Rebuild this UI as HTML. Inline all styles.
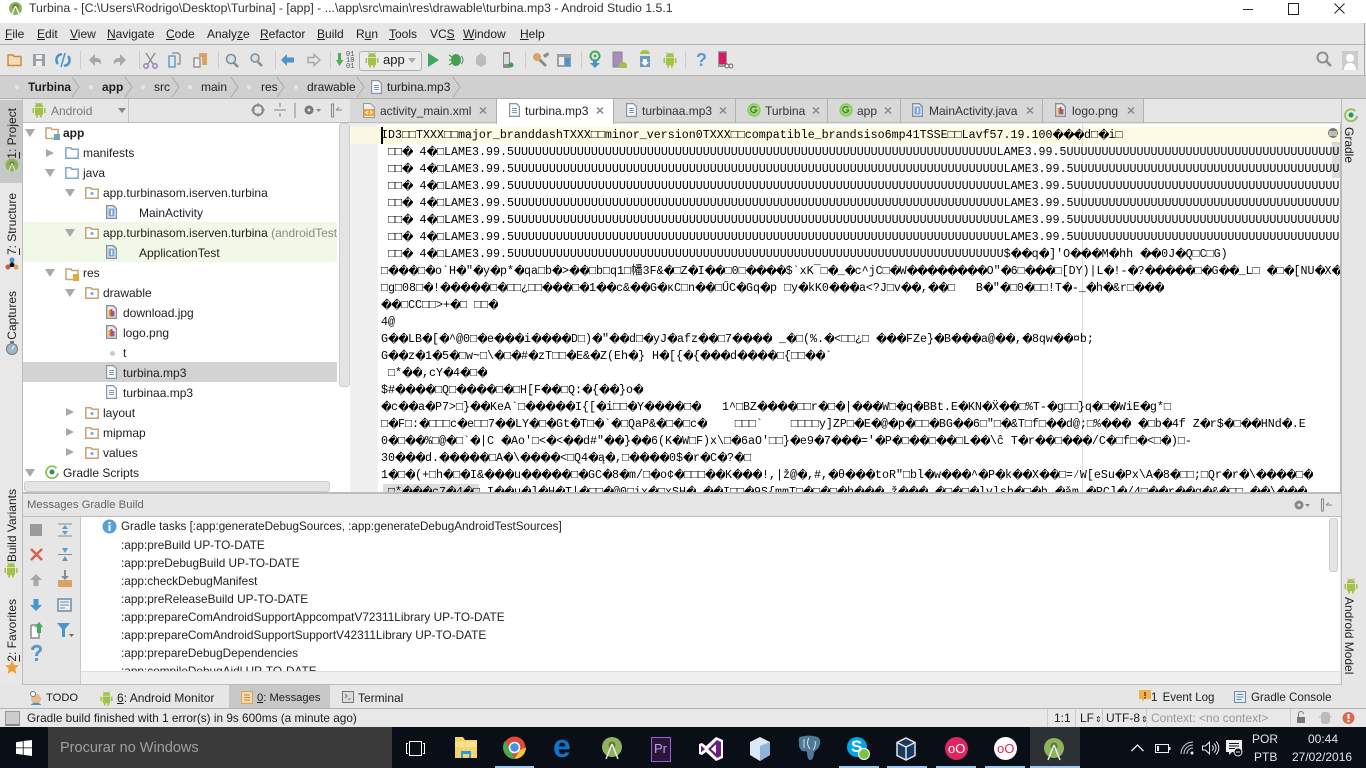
<!DOCTYPE html>
<html><head><meta charset="utf-8"><title>Turbina</title>
<style>
html,body{margin:0;padding:0;width:1366px;height:768px;overflow:hidden;background:#e6e6e6}
body{font:12px "Liberation Sans",sans-serif;color:#1e1e1e;position:relative}
.a,.t,svg.s{position:absolute}
.t{white-space:pre;line-height:16px;height:16px}
svg.s{overflow:visible}
.b{font-weight:bold}
.v{position:absolute;writing-mode:vertical-rl;transform:rotate(180deg);white-space:pre;font-size:12px;line-height:14px}
.e{position:absolute;left:381px;width:959px;height:17px;overflow:hidden;white-space:pre;font:11.67px/17px "Liberation Mono","DejaVu Sans Mono",monospace;color:#000}
.e i{display:inline-block;width:10px;font:normal 11.5px/17px "DejaVu Sans",sans-serif;text-align:center;vertical-align:top;overflow:hidden}
.e.w i{width:10.5px}
.m{left:121px;color:#222;font-size:11.8px}
.u{text-decoration:underline}
</style></head>
<body>
<svg width="0" height="0" style="position:absolute">
<defs>
<symbol id="and" viewBox="0 0 14 16"><path fill="#a4c14a" d="M3 5a4 4 0 0 1 8 0zM3 5.8h8v6.4a1 1 0 0 1-1 1H4a1 1 0 0 1-1-1zM.5 6h1.6v5H.5zM11.9 6h1.6v5h-1.6zM4.3 13h1.7v2.6H4.300zM8 13h1.700v2.600H8z"/><path stroke="#a4c14a" d="M4.500 2L3.500.5M9.500 2l1-1.500"/></symbol>
<symbol id="pkg" viewBox="0 0 14 12"><path fill="#fff" stroke="#c4a377" stroke-width="1.500" d="M.8.8h5l1 1.500h6.400v9H.8z"/><circle cx="7" cy="6.500" r="1.600" fill="#7fb0d0"/></symbol>
<symbol id="blu" viewBox="0 0 14 12"><path fill="#fff" stroke="#7fa9c8" stroke-width="1.500" d="M.8.800h5l1 1.500h6.400v9H.8z"/></symbol>
<symbol id="fil" viewBox="0 0 11 14"><path fill="#fbfbfb" stroke="#8a949c" stroke-width="1.200" d="M.6.600h6.800l3 3v9.800H.600z"/><path stroke="#6d9cbc" d="M3 5.500h5M3 7.500h5M3 9.500h5"/></symbol>
<symbol id="jav" viewBox="0 0 11 14"><path fill="#eef" stroke="#8a8f96" stroke-width="1.400" d="M.7.700h6.700l3 3v9.600H.700z"/><rect x="2.500" y="3.500" width="6" height="8" fill="#74a9d8"/><rect x="5" y="5" width="1.300" height="5" fill="#fff"/></symbol>
<symbol id="img" viewBox="0 0 11 14"><path fill="#eee" stroke="#8a8f96" stroke-width="1.400" d="M.7.700h6.700l3 3v9.600H.700z"/><rect x="2.500" y="5" width="2" height="6.500" fill="#d9a23c"/><rect x="4.500" y="4" width="2" height="7.500" fill="#c24b4b"/><rect x="6.500" y="6" width="2" height="5.500" fill="#8a5fb0"/></symbol>
<symbol id="gro" viewBox="0 0 14 14"><circle cx="7" cy="7" r="6.700" fill="#8ccb63"/><circle cx="7" cy="7" r="5" fill="#a5dc7e"/><path fill="none" stroke="#3d8a2c" stroke-width="1.400" d="M9.300 5a3 3 0 1 0 .4 2.200H7.300"/></symbol>
<symbol id="gr" viewBox="0 0 14 14"><path fill="none" stroke="#8cc152" stroke-width="1.800" d="M11.500 3.200A6 6 0 1 0 13 8"/><path fill="none" stroke="#999" stroke-width="1" d="M11 11.500A6 6 0 0 0 13 8"/><circle cx="7" cy="7" r="2.500" fill="#27915a"/></symbol>
</defs></svg>

<!-- title bar -->
<div class="a" style="left:0;top:0;width:1366px;height:23px;background:#fff"></div>
<svg class="s" style="left:8px;top:1px" width="15" height="15" viewBox="0 0 15 15"><circle cx="7.500" cy="7.500" r="6.500" fill="#8fb35a"/><circle cx="7.500" cy="6" r="3" fill="#5f7a38"/><path stroke="#eee" stroke-width="1.500" d="M7.500 5L4 13M7.500 5L11 13"/></svg>
<div class="t" style="left:29px;top:0;font-size:12.300px;color:#333">Turbina - [C:\Users\Rodrigo\Desktop\Turbina] - [app] - ...\app\src\main\res\drawable\turbina.mp3 - Android Studio 1.5.1</div>
<div class="a" style="left:1243px;top:9px;width:10px;height:1px;background:#222"></div>
<div class="a" style="left:1288px;top:3px;width:9px;height:10px;border:1px solid #222"></div>
<svg class="s" style="left:1334px;top:3px" width="11" height="11"><path stroke="#222" fill="none" d="M.5.500l10 10M10.500.500l-10 10"/></svg>
<div class="a" style="left:1364px;top:23px;width:1px;height:77px;background:#aaa"></div>

<!-- menu -->
<div class="a" style="left:0;top:44px;width:1366px;height:1px;background:#b4b4b4"></div>
<div class="t" style="left:5px;top:26px"><span class="u">F</span>ile</div>
<div class="t" style="left:37px;top:26px"><span class="u">E</span>dit</div>
<div class="t" style="left:70px;top:26px"><span class="u">V</span>iew</div>
<div class="t" style="left:107px;top:26px"><span class="u">N</span>avigate</div>
<div class="t" style="left:166px;top:26px"><span class="u">C</span>ode</div>
<div class="t" style="left:207px;top:26px">Analy<span class="u">z</span>e</div>
<div class="t" style="left:260px;top:26px"><span class="u">R</span>efactor</div>
<div class="t" style="left:317px;top:26px"><span class="u">B</span>uild</div>
<div class="t" style="left:356px;top:26px">R<span class="u">u</span>n</div>
<div class="t" style="left:389px;top:26px"><span class="u">T</span>ools</div>
<div class="t" style="left:430px;top:26px">VC<span class="u">S</span></div>
<div class="t" style="left:463px;top:26px"><span class="u">W</span>indow</div>
<div class="t" style="left:520px;top:26px"><span class="u">H</span>elp</div>

<!-- toolbar -->
<div class="a" style="left:0;top:75px;width:1366px;height:1px;background:#b4b4b4"></div>
<svg class="s" style="left:0;top:45px" width="760" height="30" viewBox="0 0 760 30">
<path fill="#f3dcb4" stroke="#c98f45" stroke-width="1.500" d="M8 10h5l1 1.500h7v9H8z"/>
<path fill="#9aa0a6" d="M33 9h12v12H33z"/><path fill="#eee" d="M36 10h6v4h-6zM36 16h6v5h-6z"/>
<path fill="none" stroke="#4a94cc" stroke-width="2.500" d="M58 19a6 6 0 0 1 1-9l3-1M68 11a6 6 0 0 1-1 9l-3 1"/><path stroke="#4a94cc" stroke-width="1.500" d="M61 22l4-14"/>
<path stroke="#ccc" d="M80.500 6v18M139.500 6v18M218.500 6v18M275.500 6v18M330.500 6v18M525.500 6v18M581.500 6v18M685.500 6v18"/>
<path fill="#a8a8a8" d="M89 15l6-6v4c4 0 7 1 6 7-1-3-3-3-6-3v4z"/>
<path fill="#a8a8a8" d="M126 15l-6-6v4c-4 0-7 1-6 7 1-3 3-3 6-3v4z"/>
<path stroke="#8a8a8a" stroke-width="1.300" d="M146 8l7 11M155 8l-7 11"/><circle cx="146" cy="21" r="2.200" fill="none" stroke="#a07cc0" stroke-width="1.500"/><circle cx="155" cy="21" r="2.200" fill="none" stroke="#a07cc0" stroke-width="1.500"/>
<path fill="#dce9f3" stroke="#5d8fb5" stroke-width="1.300" d="M169 11h6v11h-6z"/><path fill="none" stroke="#8a8a8a" stroke-width="1.300" d="M172 8h6l2 2v9h-3"/>
<path fill="#eee" stroke="#8a8a8a" stroke-width="1.300" d="M194 13h6v9h-6z"/><path fill="#d9a463" d="M199 8h8v12h-5v-8h-3z"/>
<circle cx="231" cy="14" r="4.500" fill="#cfe3ef" stroke="#8a8a8a" stroke-width="1.500"/><path stroke="#8a8a8a" stroke-width="2.500" d="M234 18l4 4"/>
<circle cx="255" cy="13" r="4" fill="#cfe3ef" stroke="#8a8a8a" stroke-width="1.500"/><path stroke="#8a8a8a" stroke-width="2.500" d="M258 17l4 4"/>
<path fill="#4a94cc" d="M281 15l6-6v3.500h7v5h-7V21z"/>
<path fill="none" stroke="#a8a8a8" stroke-width="1.500" d="M320 15l-6-5.500v3h-6v5h6v3z"/>
<path fill="#4caf50" d="M338 8h3v7h2.500L339.500 21 336 15h2z"/>
</svg>
<div class="t" style="left:346px;top:52px;font:7px/6px 'Liberation Mono',monospace;height:18px;color:#555">01
10
01</div>
<div class="a" style="left:359px;top:51px;width:61px;height:18px;background:#ececec;border:1px solid #b0b0b0;border-radius:3px"></div>
<svg class="s" style="left:365px;top:52px;width:14px;height:16px"><use href="#and"/></svg>
<div class="t" style="left:383px;top:52px;font-size:13px">app</div>
<svg class="s" style="left:408px;top:58px" width="9" height="6"><path fill="#aaa" d="M0 0h8L4 5z"/></svg>
<svg class="s" style="left:0;top:45px" width="760" height="30" viewBox="0 0 760 30">
<path fill="#3fa75b" d="M428 8l11 7-11 7z"/>
<ellipse cx="456" cy="15" rx="5" ry="6" fill="#459e52"/><path stroke="#459e52" stroke-width="1.200" d="M449 10l3 2M449 15h3M449 20l3-2"/><path fill="none" stroke="#777" d="M461 11a5 5 0 0 1 0 8"/>
<path fill="#bbb" d="M476 12l5-4 5 4v7l-5 3-5-3z"/>
<rect x="503" y="7" width="7" height="16" rx="1" fill="#8a8a8a"/><rect x="504" y="9" width="5" height="10" fill="#dcdcdc"/><circle cx="511" cy="20" r="2.500" fill="#3f9b52"/>
<path fill="#8a8a8a" d="M540 13l7 7-2 2-7-7z"/><circle cx="537" cy="12" r="4" fill="#d9a463"/><path fill="#8a8a8a" d="M543 10l5-3 1 3-4 3z"/>
<rect x="557" y="9" width="14" height="13" fill="#9aa0a6"/><rect x="559" y="12" width="5" height="8" fill="#eee"/><rect x="565" y="13" width="5" height="8" fill="#4a94cc"/>
<circle cx="595" cy="11" r="4.500" fill="none" stroke="#43a860" stroke-width="2"/><circle cx="595" cy="11" r="1.500" fill="#43a860"/><path fill="#4a94cc" d="M593 15h4v3h3l-5 5-5-5h3z"/>
<rect x="613" y="7" width="9" height="15" fill="#a68cc0" stroke="#888"/><path fill="#a4c14a" d="M619 23v-3a4 3 0 0 1 8 0v3z"/>
<path fill="#a4c14a" d="M640 9a5 4 0 0 1 10 0z"/><rect x="640" y="11" width="10" height="11" fill="#6a9cc0"/><path fill="#fff" d="M643 14h4v3h2l-4 4-4-4h2z"/>
</svg>
<svg class="s" style="left:663px;top:52px;width:14px;height:16px"><use href="#and"/></svg>
<div class="t b" style="left:696px;top:50px;font-size:18px;line-height:20px;height:20px;color:#5b9bc8">?</div>
<svg class="s" style="left:717px;top:51px" width="18" height="18"><rect x="1" y="0" width="9" height="16" rx="1" fill="#999"/><rect x="2" y="1.500" width="7" height="11.500" fill="#d81b60"/><circle cx="10" cy="15" r="2" fill="#eee" stroke="#333" stroke-width=".7"/><circle cx="14" cy="15" r="2" fill="#eee" stroke="#333" stroke-width=".7"/></svg>
<svg class="s" style="left:1316px;top:51px" width="16" height="17"><circle cx="6.500" cy="6.500" r="5" fill="none" stroke="#8e8e8e" stroke-width="2"/><path stroke="#8e8e8e" stroke-width="2.500" d="M10 10l5 5"/></svg>
<div class="a" style="left:1342px;top:51px;width:16px;height:19px;background:#ccc"></div>
<svg class="s" style="left:1342px;top:51px" width="16" height="19"><circle cx="8" cy="7" r="4" fill="#fff"/><path fill="#fff" d="M2 19c0-5 3-7 6-7s6 2 6 7z"/></svg>

<!-- breadcrumb -->
<div class="a" style="left:0;top:76px;width:1366px;height:22px;background:#d0d0d0"></div>
<div class="a" style="left:0;top:98px;width:1366px;height:1px;background:#b0b0b0"></div>
<svg class="s" style="left:0;top:76px" width="500" height="22"><g fill="#e6e6e6"><circle cx="17" cy="11" r="2"/><circle cx="91" cy="11" r="2"/><circle cx="143" cy="11" r="2"/><circle cx="190" cy="11" r="2"/><circle cx="249" cy="11" r="2"/><circle cx="296" cy="11" r="2"/></g><path fill="none" stroke="#aaa" d="M72 1l7 10-7 10M125 1l7 10-7 10M172 1l7 10-7 10M231 1l7 10-7 10M277 1l7 10-7 10M357 1l7 10-7 10M453 1l7 10-7 10"/></svg>
<div class="t b" style="left:28px;top:79px">Turbina</div>
<div class="t b" style="left:102px;top:79px">app</div>
<div class="t" style="left:154px;top:79px">src</div>
<div class="t" style="left:201px;top:79px">main</div>
<div class="t" style="left:261px;top:79px">res</div>
<div class="t" style="left:307px;top:79px">drawable</div>
<svg class="s" style="left:371px;top:80px;width:11px;height:14px"><use href="#fil"/></svg>
<div class="t" style="left:387px;top:79px">turbina.mp3</div>

<!-- left strip -->
<div class="a" style="left:0;top:99px;width:22px;height:586px;background:#e8e8e8;border-right:1px solid #bcbcbc"></div>
<div class="a" style="left:0;top:100px;width:22px;height:83px;background:#c8c8c8"></div>
<div class="v" style="left:5px;top:108px"><span class="u">1</span>: Project</div>
<div class="v" style="left:5px;top:193px"><span class="u">7</span>: Structure</div>
<div class="v" style="left:5px;top:291px">Captures</div>
<div class="v" style="left:5px;top:489px">Build Variants</div>
<div class="v" style="left:5px;top:599px"><span class="u">2</span>: Favorites</div>
<svg class="s" style="left:5px;top:158px" width="14" height="14"><circle cx="7" cy="7" r="6.500" fill="#8fb35a"/><circle cx="7" cy="6" r="2.500" fill="#5f7a38"/><path stroke="#eee" d="M7 5l-3 8M7 5l3 8"/></svg>
<svg class="s" style="left:5px;top:257px" width="14" height="14"><path stroke="#999" d="M3 10l4-7 4 7"/><circle cx="7" cy="3" r="2.500" fill="#4a94cc"/><circle cx="3" cy="10" r="2.500" fill="#cc5a4a"/><circle cx="11" cy="10" r="2.500" fill="#d9a463"/></svg>
<svg class="s" style="left:5px;top:341px" width="14" height="14"><circle cx="7" cy="8" r="5.500" fill="#9bb7cc" stroke="#777"/><path stroke="#fff" d="M7 8l2-3"/><rect x="5" y="0" width="4" height="2" fill="#777"/></svg>
<svg class="s" style="left:4px;top:562px;width:14px;height:16px"><use href="#and"/></svg>
<svg class="s" style="left:5px;top:660px" width="14" height="14"><path fill="#eea03c" d="M7 0l2 5 5 .4-3.800 3.200L11.400 14 7 11 2.600 14l1.200-5.400L0 5.400 5 5z"/></svg>

<!-- project panel -->
<div class="a" style="left:23px;top:99px;width:327px;height:23px;background:#e6e6e6;border-bottom:1px solid #bcbcbc"></div>
<div class="a" style="left:128px;top:99px;width:1px;height:23px;background:#c4c4c4"></div>
<svg class="s" style="left:32px;top:102px;width:14px;height:16px"><use href="#and"/></svg>
<div class="t" style="left:51px;top:103px;color:#7a7a7a">Android</div>
<svg class="s" style="left:118px;top:108px" width="8" height="6"><path fill="#888" d="M0 0h8L4 5z"/></svg>
<svg class="s" style="left:251px;top:103px" width="90" height="16"><circle cx="7" cy="7" r="5" fill="none" stroke="#888" stroke-width="2"/><path stroke="#888" d="M7 0v4M7 10v4M0 7h4M10 7h4M23 7h12M29 0v4M29 10v4M44 0v15"/><circle cx="58" cy="7" r="4.500" fill="#777"/><circle cx="58" cy="7" r="1.500" fill="#e6e6e6"/><path fill="#888" d="M65 6h5l-2.500 3z"/><path stroke="#888" fill="none" d="M80.500 1v13h2V1zM85 7h6M85 7l3-2.500"/></svg>

<div class="a" style="left:23px;top:123px;width:327px;height:370px;background:#fff;overflow:hidden"></div>
<div class="a" style="left:23px;top:222px;width:314px;height:40px;background:#f1f8e8"></div>
<div class="a" style="left:23px;top:362px;width:314px;height:20px;background:#d2d2d2"></div>
<div class="a" style="left:339px;top:123px;width:9px;height:262px;background:#e4e4e4;border:1px solid #ccc;border-radius:3px"></div>
<div class="a" style="left:24px;top:481px;width:304px;height:9px;background:#e4e4e4;border:1px solid #ccc;border-radius:3px"></div>

<svg class="s" style="left:0;top:123px" width="100" height="360"><g fill="#a8a8a8">
<path d="M25 6h10l-5 8z"/>
<path d="M46 24v8l8-4z" transform="translate(0,2)"/>
<path d="M45 46h10l-5 8z"/>
<path d="M65 66h10l-5 8z"/>
<path d="M65 106h10l-5 8z"/>
<path d="M45 146h10l-5 8z"/>
<path d="M65 166h10l-5 8z"/>
<path d="M66 285v8l8-4z"/><path d="M66 305v8l8-4z"/><path d="M66 325v8l8-4z"/>
<path d="M25 346h10l-5 8z"/>
</g>
<path fill="#fff" stroke="#c4a377" stroke-width="1.500" d="M46 5h5l1 1.500h6v9H46z"/><rect x="54" y="11" width="6" height="6" fill="#6ea4c8"/>
<path fill="#fff" stroke="#c4a377" stroke-width="1.500" d="M66 146h5l1 1.500h6v9H66z"/><rect x="73" y="151" width="6" height="7" fill="#e0a93c"/>
</svg>
<svg class="s" style="left:65px;top:147px;width:14px;height:12px"><use href="#blu"/></svg>
<svg class="s" style="left:65px;top:167px;width:14px;height:12px"><use href="#blu"/></svg>
<svg class="s" style="left:85px;top:187px;width:14px;height:12px"><use href="#pkg"/></svg>
<svg class="s" style="left:85px;top:227px;width:14px;height:12px"><use href="#pkg"/></svg>
<svg class="s" style="left:85px;top:287px;width:14px;height:12px"><use href="#pkg"/></svg>
<svg class="s" style="left:85px;top:407px;width:14px;height:12px"><use href="#pkg"/></svg>
<svg class="s" style="left:85px;top:427px;width:14px;height:12px"><use href="#pkg"/></svg>
<svg class="s" style="left:85px;top:447px;width:14px;height:12px"><use href="#pkg"/></svg>
<svg class="s" style="left:106px;top:205px;width:11px;height:14px"><use href="#jav"/></svg>
<svg class="s" style="left:106px;top:245px;width:11px;height:14px"><use href="#jav"/></svg>
<svg class="s" style="left:106px;top:305px;width:11px;height:14px"><use href="#img"/></svg>
<svg class="s" style="left:106px;top:325px;width:11px;height:14px"><use href="#img"/></svg>
<div class="a" style="left:110px;top:351px;width:5px;height:5px;background:#ccc;border-radius:3px"></div>
<svg class="s" style="left:106px;top:365px;width:11px;height:14px"><use href="#fil"/></svg>
<svg class="s" style="left:106px;top:385px;width:11px;height:14px"><use href="#fil"/></svg>
<svg class="s" style="left:45px;top:465px;width:14px;height:14px"><use href="#gr"/></svg>

<div class="t b" style="left:63px;top:125px">app</div>
<div class="t" style="left:83px;top:145px">manifests</div>
<div class="t" style="left:83px;top:165px">java</div>
<div class="t" style="left:103px;top:185px">app.turbinasom.iserven.turbina</div>
<div class="t" style="left:139px;top:205px">MainActivity</div>
<div class="t" style="left:103px;top:225px">app.turbinasom.iserven.turbina <span style="color:#8a8a8a">(androidTest</span></div>
<div class="t" style="left:139px;top:245px">ApplicationTest</div>
<div class="t" style="left:83px;top:265px">res</div>
<div class="t" style="left:103px;top:285px">drawable</div>
<div class="t" style="left:123px;top:305px">download.jpg</div>
<div class="t" style="left:123px;top:325px">logo.png</div>
<div class="t" style="left:123px;top:345px">t</div>
<div class="t" style="left:123px;top:365px">turbina.mp3</div>
<div class="t" style="left:123px;top:385px">turbinaa.mp3</div>
<div class="t" style="left:103px;top:405px">layout</div>
<div class="t" style="left:103px;top:425px">mipmap</div>
<div class="t" style="left:103px;top:445px">values</div>
<div class="t" style="left:63px;top:465px">Gradle Scripts</div>

<!-- tabs -->
<div class="a" style="left:350px;top:99px;width:992px;height:23px;background:#d8d8d8;border-bottom:1px solid #bcbcbc"></div>
<div class="a" style="left:1143px;top:99px;width:199px;height:23px;background:#e6e6e6;border-bottom:1px solid #bcbcbc"></div>
<div class="a" style="left:496px;top:99px;width:116px;height:25px;background:#fff;border-right:1px solid #b0b0b0;border-left:1px solid #b0b0b0"></div>
<div class="a" style="left:735px;top:99px;width:1px;height:23px;background:#b0b0b0"></div>
<div class="a" style="left:827px;top:99px;width:1px;height:23px;background:#b0b0b0"></div>
<div class="a" style="left:900px;top:99px;width:1px;height:23px;background:#b0b0b0"></div>
<div class="a" style="left:1042px;top:99px;width:1px;height:23px;background:#b0b0b0"></div>
<div class="a" style="left:1143px;top:99px;width:1px;height:23px;background:#b0b0b0"></div>
<svg class="s" style="left:363px;top:103px" width="12" height="15"><path fill="#eee" stroke="#999" d="M.5.500h7l4 4v10H.500z"/><rect x="1" y="6" width="10" height="7" fill="#eda63c"/><path fill="none" stroke="#fff" d="M5 8L3 9.500 5 11M7 8l2 1.500L7 11"/></svg>
<svg class="s" style="left:509px;top:103px;width:11px;height:14px"><use href="#fil"/></svg>
<svg class="s" style="left:626px;top:103px;width:11px;height:14px"><use href="#fil"/></svg>
<svg class="s" style="left:747px;top:103px;width:14px;height:14px"><use href="#gro"/></svg>
<svg class="s" style="left:839px;top:103px;width:14px;height:14px"><use href="#gro"/></svg>
<svg class="s" style="left:912px;top:103px;width:11px;height:14px"><use href="#jav"/></svg>
<svg class="s" style="left:1055px;top:103px;width:11px;height:14px"><use href="#img"/></svg>
<div class="t" style="left:380px;top:103px;color:#333">activity_main.xml</div>
<div class="t" style="left:525px;top:103px">turbina.mp3</div>
<div class="t" style="left:642px;top:103px;color:#333">turbinaa.mp3</div>
<div class="t" style="left:765px;top:103px;color:#333">Turbina</div>
<div class="t" style="left:857px;top:103px;color:#333">app</div>
<div class="t" style="left:929px;top:103px;color:#333">MainActivity.java</div>
<div class="t" style="left:1072px;top:103px;color:#333">logo.png</div>
<svg class="s" style="left:0;top:107px" width="1143" height="8"><path stroke="#888" stroke-width="1.500" fill="none" d="M480 .5l6 6m0-6l-6 6M597 .5l6 6m0-6l-6 6M720 .5l6 6m0-6l-6 6M813 .5l6 6m0-6l-6 6M885 .5l6 6m0-6l-6 6M1027 .5l6 6m0-6l-6 6M1128 .5l6 6m0-6l-6 6"/></svg>

<!-- editor -->
<div class="a" style="left:350px;top:124px;width:991px;height:368px;background:#fff"></div>
<div class="a" style="left:350px;top:124px;width:28px;height:368px;background:#f0f0f0"></div>
<div class="a" style="left:350px;top:127px;width:28px;height:17px;background:#fdf8e4"></div>
<div class="a" style="left:378px;top:127px;width:962px;height:17px;background:#fffae3"></div>
<div class="a" style="left:1082px;top:124px;width:1px;height:368px;background:#dcdcdc"></div>
<div class="a" style="left:381px;top:127px;width:2px;height:17px;background:#000"></div>
<div class="e w" style="top:127px">ID3□□TXXX□□major_branddashTXXX□□minor_version0TXXX□□compatible_brandsiso6mp41TSSE□□Lavf57.19.100<i>�</i><i>�</i><i>�</i>d□<i>�</i>i□</div>
<div class="e w" style="top:144px"> □□<i>�</i> 4<i>�</i>□LAME3.99.5UUUUUUUUUUUUUUUUUUUUUUUUUUUUUUUUUUUUUUUUUUUUUUUUUUUUUUUUUUUUUUUUUUUUULAME3.99.5UUUUUUUUUUUUUUUUUUUUUUUUUUUUUUUUUUUUUUUUUUUUUUUUUU</div>
<div class="e w" style="top:161px"> □□<i>�</i> 4<i>�</i>□LAME3.99.5UUUUUUUUUUUUUUUUUUUUUUUUUUUUUUUUUUUUUUUUUUUUUUUUUUUUUUUUUUUUUUUUUUUUUULAME3.99.5UUUUUUUUUUUUUUUUUUUUUUUUUUUUUUUUUUUUUUUUUUUUUUUUUU</div>
<div class="e w" style="top:178px"> □□<i>�</i> 4<i>�</i>□LAME3.99.5UUUUUUUUUUUUUUUUUUUUUUUUUUUUUUUUUUUUUUUUUUUUUUUUUUUUUUUUUUUUUUUUUUUUUULAME3.99.5UUUUUUUUUUUUUUUUUUUUUUUUUUUUUUUUUUUUUUUUUUUUUUUUUU</div>
<div class="e w" style="top:195px"> □□<i>�</i> 4<i>�</i>□LAME3.99.5UUUUUUUUUUUUUUUUUUUUUUUUUUUUUUUUUUUUUUUUUUUUUUUUUUUUUUUUUUUUUUUUUUUUUULAME3.99.5UUUUUUUUUUUUUUUUUUUUUUUUUUUUUUUUUUUUUUUUUUUUUUUUUU</div>
<div class="e w" style="top:212px"> □□<i>�</i> 4<i>�</i>□LAME3.99.5UUUUUUUUUUUUUUUUUUUUUUUUUUUUUUUUUUUUUUUUUUUUUUUUUUUUUUUUUUUUUUUUUUUUUULAME3.99.5UUUUUUUUUUUUUUUUUUUUUUUUUUUUUUUUUUUUUUUUUUUUUUUUUU</div>
<div class="e w" style="top:229px"> □□<i>�</i> 4<i>�</i>□LAME3.99.5UUUUUUUUUUUUUUUUUUUUUUUUUUUUUUUUUUUUUUUUUUUUUUUUUUUUUUUUUUUUUUUUUUUUUULAME3.99.5UUUUUUUUUUUUUUUUUUUUUUUUUUUUUUUUUUUUUUUUUUUUUUUUUU</div>
<div class="e w" style="top:246px"> □□<i>�</i> 4<i>�</i>□LAME3.99.5UUUUUUUUUUUUUUUUUUUUUUUUUUUUUUUUUUUUUUUUUUUUUUUUUUUUUUUUUUUUUUUUUUUUUU$<i>�</i><i>�</i>q<i>�</i>]'O<i>�</i><i>�</i><i>�</i>M<i>�</i>hh <i>�</i><i>�</i>0J<i>�</i>Q□C□G)</div>
<div class="e" style="top:263px">□<i>�</i><i>�</i><i>�</i>□<i>�</i>o`H<i>�</i>"<i>�</i>y<i>�</i>p*<i>�</i>qa□b<i>�</i>&gt;<i>�</i><i>�</i>□b□q1□幡3F&amp;<i>�</i>□Z<i>�</i>I<i>�</i><i>�</i>□0□<i>�</i><i>�</i><i>�</i><i>�</i>$`xK¯□<i>�</i>_<i>�</i>c^jC□<i>�</i>W<i>�</i><i>�</i><i>�</i><i>�</i><i>�</i><i>�</i><i>�</i><i>�</i>O"<i>�</i>6□<i>�</i><i>�</i><i>�</i>□[DY)|L<i>�</i>!-<i>�</i>?<i>�</i><i>�</i><i>�</i><i>�</i><i>�</i>□<i>�</i>G<i>�</i><i>�</i>_L□ <i>�</i>□<i>�</i>[NU<i>�</i>X<i>�</i></div>
<div class="e" style="top:280px">□g□08□<i>�</i>!<i>�</i><i>�</i><i>�</i><i>�</i><i>�</i>□<i>�</i>□□¿□□<i>�</i><i>�</i><i>�</i>□<i>�</i>1<i>�</i><i>�</i>c&amp;<i>�</i><i>�</i>G<i>�</i>κC□n<i>�</i><i>�</i>□ŰC<i>�</i>Gq<i>�</i>p □y<i>�</i>kK0<i>�</i><i>�</i><i>�</i>a&lt;?J□v<i>�</i><i>�</i>,<i>�</i><i>�</i>□   B<i>�</i>"<i>�</i>□0<i>�</i>□□!T<i>�</i>-_<i>�</i>h<i>�</i>&amp;r□<i>�</i><i>�</i><i>�</i></div>
<div class="e" style="top:297px"><i>�</i><i>�</i>□CC□□&gt;+<i>�</i>□ □□<i>�</i></div>
<div class="e" style="top:314px">4@</div>
<div class="e" style="top:331px">G<i>�</i><i>�</i>LB<i>�</i>[<i>�</i>^@0□<i>�</i>e<i>�</i><i>�</i><i>�</i>i<i>�</i><i>�</i><i>�</i><i>�</i>D□)<i>�</i>"<i>�</i><i>�</i>d□<i>�</i>yJ<i>�</i>afz<i>�</i><i>�</i>□7<i>�</i><i>�</i><i>�</i><i>�</i> _<i>�</i>□(%.<i>�</i>&lt;□□¿□ <i>�</i><i>�</i><i>�</i>FZe}<i>�</i>B<i>�</i><i>�</i><i>�</i>a@<i>�</i><i>�</i>,<i>�</i>8qw<i>�</i><i>�</i>¤b;</div>
<div class="e" style="top:348px">G<i>�</i><i>�</i>z<i>�</i>1<i>�</i>5<i>�</i>□w~□\<i>�</i>□<i>�</i>#<i>�</i>zT□□<i>�</i>E&amp;<i>�</i>Z(Eh<i>�</i>} H<i>�</i>[{<i>�</i>{<i>�</i><i>�</i><i>�</i>d<i>�</i><i>�</i><i>�</i><i>�</i>□{□□<i>�</i><i>�</i>`</div>
<div class="e" style="top:365px"> □*<i>�</i><i>�</i>,cY<i>�</i>4<i>�</i>□<i>�</i></div>
<div class="e" style="top:382px">$#<i>�</i><i>�</i><i>�</i><i>�</i>□Q□<i>�</i><i>�</i><i>�</i><i>�</i>□<i>�</i>□H[F<i>�</i><i>�</i>□Q:<i>�</i>{<i>�</i><i>�</i>}o<i>�</i></div>
<div class="e" style="top:399px"><i>�</i>c<i>�</i><i>�</i>a<i>�</i>P7&gt;□}<i>�</i><i>�</i>KeA`□<i>�</i><i>�</i><i>�</i><i>�</i><i>�</i>I{[<i>�</i>i□□<i>�</i>Y<i>�</i><i>�</i><i>�</i><i>�</i>□<i>�</i>   1^□BZ<i>�</i><i>�</i><i>�</i><i>�</i>□□r<i>�</i>□<i>�</i>|<i>�</i><i>�</i><i>�</i>W□<i>�</i>q<i>�</i>BBt.E<i>�</i>KN<i>�</i>Ẍ<i>�</i><i>�</i>□%T-<i>�</i>g□□}q<i>�</i>□<i>�</i>WiE<i>�</i>g*□</div>
<div class="e" style="top:416px">□<i>�</i>F□:<i>�</i>□□□c<i>�</i>e□□7<i>�</i><i>�</i>LY<i>�</i>□<i>�</i>Gt<i>�</i>T□<i>�</i>`<i>�</i>□QaP&amp;<i>�</i>□<i>�</i>□c<i>�</i>    □□□`    □□□□y]ZP□<i>�</i>E<i>�</i>@<i>�</i>p<i>�</i>□□<i>�</i>BG<i>�</i><i>�</i>6□"□<i>�</i>&amp;T□f□<i>�</i><i>�</i>d@;□%<i>�</i><i>�</i><i>�</i> <i>�</i>□b<i>�</i>4f Z<i>�</i>r$<i>�</i>□<i>�</i><i>�</i>HNd<i>�</i>.E</div>
<div class="e" style="top:433px">0<i>�</i>□<i>�</i><i>�</i>%□@<i>�</i>□`<i>�</i>|C <i>�</i>Ao'□&lt;<i>�</i>&lt;<i>�</i><i>�</i>d#"<i>�</i><i>�</i>}<i>�</i><i>�</i>6(K<i>�</i>W□F)x\□<i>�</i>6aO'□□}<i>�</i>e9<i>�</i>7<i>�</i><i>�</i><i>�</i>='<i>�</i>P<i>�</i>□<i>�</i><i>�</i>□<i>�</i><i>�</i>□L<i>�</i><i>�</i>\ĉ T<i>�</i>r<i>�</i><i>�</i>□<i>�</i><i>�</i><i>�</i>/C<i>�</i>□f□<i>�</i>&lt;□<i>�</i>)□-</div>
<div class="e" style="top:450px">30<i>�</i><i>�</i><i>�</i>d.<i>�</i><i>�</i><i>�</i><i>�</i><i>�</i>□A<i>�</i>\<i>�</i><i>�</i><i>�</i><i>�</i>&lt;□Q4<i>�</i>ą<i>�</i>,□<i>�</i><i>�</i><i>�</i><i>�</i>0$<i>�</i>r<i>�</i>C<i>�</i>?<i>�</i>□</div>
<div class="e" style="top:467px">1<i>�</i>□<i>�</i>(+□h<i>�</i>□<i>�</i>I&amp;<i>�</i><i>�</i><i>�</i>u<i>�</i><i>�</i><i>�</i><i>�</i><i>�</i>□<i>�</i>GC<i>�</i>8<i>�</i>m/□<i>�</i>o¢<i>�</i>□□□<i>�</i><i>�</i>K<i>�</i><i>�</i><i>�</i>!,|ž@<i>�</i>,#,<i>�</i>θ<i>�</i><i>�</i><i>�</i>toR"□bl<i>�</i>w<i>�</i><i>�</i><i>�</i>^<i>�</i>P<i>�</i>k<i>�</i><i>�</i>X<i>�</i><i>�</i>□=⁄W[eSu<i>�</i>Px\A<i>�</i>8<i>�</i>□□;□Qr<i>�</i>r<i>�</i>\<i>�</i><i>�</i><i>�</i><i>�</i>□<i>�</i></div>
<div class="a" style="left:383px;top:484px;width:96px;height:8px;background:#dcdcdc"></div>
<div class="e" style="top:484px;height:8px"> □*<i>�</i><i>�</i><i>�</i>c7<i>�</i>4<i>�</i>□ I<i>�</i><i>�</i>u<i>�</i>]<i>�</i>H<i>�</i>T|<i>�</i>□□<i>�</i>@0□ix<i>�</i>□xSH<i>�</i> <i>�</i><i>�</i>I□□<i>�</i>9S{mmT□<i>�</i>□<i>�</i>□<i>�</i>h<i>�</i><i>�</i><i>�</i> ž<i>�</i><i>�</i><i>�</i> <i>�</i>□<i>�</i>□<i>�</i>lvlsh<i>�</i>□<i>�</i>h <i>�</i>ǎm <i>�</i>PC]<i>�</i>/4□<i>�</i><i>�</i>r<i>�</i><i>�</i>g<i>�</i>&amp;<i>�</i>□□ <i>�</i><i>�</i>\<i>�</i><i>�</i><i>�</i></div>
<div class="a" style="left:1340px;top:124px;width:1px;height:368px;background:#b8b8b8"></div>
<div class="a" style="left:1332px;top:142px;width:8px;height:36px;background:#dcdcdc;mix-blend-mode:multiply"></div>
<svg class="s" style="left:1327px;top:127px" width="12" height="12"><circle cx="6" cy="6" r="5" fill="#777"/><path stroke="#fff" d="M3 4v5M5 4v5M7 4v5M9 4v5"/></svg>

<!-- right strip -->
<div class="a" style="left:1341px;top:99px;width:25px;height:586px;background:#e6e6e6;border-left:1px solid #bcbcbc"></div>
<svg class="s" style="left:1344px;top:108px;width:14px;height:14px"><use href="#gr"/></svg>
<div class="v" style="left:1342px;top:127px;transform:none">Gradle</div>
<svg class="s" style="left:1344px;top:578px;width:14px;height:16px"><use href="#and"/></svg>
<div class="v" style="left:1342px;top:597px;transform:none">Android Model</div>

<!-- messages panel -->
<div class="a" style="left:23px;top:492px;width:1318px;height:2px;background:#bcbcbc"></div>
<div class="a" style="left:23px;top:494px;width:1318px;height:22px;background:#e6e6e6;border-bottom:1px solid #bcbcbc"></div>
<div class="t" style="left:27px;top:497px;color:#666;font-size:11.300px">Messages Gradle Build</div>
<svg class="s" style="left:1292px;top:498px" width="48" height="14"><circle cx="7" cy="7" r="4.500" fill="#888"/><circle cx="7" cy="7" r="1.500" fill="#e6e6e6"/><path fill="#888" d="M13 6h5l-2.500 3z"/><path stroke="#888" fill="none" d="M29.500 1v12h2V1zM34 7h6M34 7l3-2.500"/></svg>
<div class="a" style="left:23px;top:517px;width:57px;height:168px;background:#e6e6e6;border-right:1px solid #c8c8c8"></div>
<div class="a" style="left:81px;top:517px;width:1259px;height:154px;background:#fff"></div>
<div class="a" style="left:81px;top:671px;width:1259px;height:13px;background:#f0f0f0;border-top:1px solid #ddd;box-sizing:border-box"></div>
<div class="a" style="left:23px;top:684px;width:1318px;height:1px;background:#bcbcbc"></div>
<div class="a" style="left:1329px;top:518px;width:9px;height:54px;background:#e4e4e4;border:1px solid #ccc;box-sizing:border-box;border-radius:3px"></div>

<svg class="s" style="left:23px;top:517px" width="58" height="160">
<rect x="7" y="7" width="12" height="12" fill="#9a9a9a"/>
<path stroke="#d9604f" stroke-width="2.500" d="M8 32l11 11M19 32L8 43"/>
<path fill="#a8a8a8" d="M13 57l6 6h-3.500v6h-5v-6H7z"/>
<path fill="#4a94cc" d="M13 94l6-6h-3.500v-6h-5v6H7z"/>
<path fill="#fff" stroke="#8a8a8a" stroke-width="1.500" d="M8 108h8v3M16 116v5H8v-13"/><path fill="#43a860" d="M16 105l4 5h-2v6h-4v-6h-2z"/>
<path fill="#5b9bc8" d="M8 133c0-7 11-7 11-1 0 4-4 3-4 7h-3c0-5 4-5 4-7 0-2-5-2-5 1zM12 141h3v3h-3z"/>
<g fill="none" stroke="#8a8a8a"><path d="M35 7h14M35 19h14"/></g>
<path fill="#5b9bc8" d="M42 8l3 4h-6zM42 18l3-4h-6z"/>
<path stroke="#8a8a8a" d="M35 37.500h14"/><path fill="#5b9bc8" d="M42 36l-3-5h6zM42 39l-3 5h6z"/>
<path fill="#d9a463" d="M35 63h14v7H35z"/><path fill="#8a8a8a" d="M41 53h2v6h3l-4 4-4-4h3z"/>
<rect x="35" y="82" width="13" height="12" fill="#eee" stroke="#6c8ca5" stroke-width="1.500"/><path stroke="#6c8ca5" d="M37 85h9M37 88h9M37 91h5"/>
<path fill="#4a94cc" d="M34 106h13l-5 6v8h-3v-8z"/><path fill="#666" d="M46 117h5l-2.500 3z"/>
</svg>
<svg class="s" style="left:102px;top:519px" width="15" height="15"><circle cx="7.500" cy="7.500" r="7" fill="#5b9fd4"/><rect x="6.500" y="6" width="2" height="6" fill="#fff"/><rect x="6.500" y="3" width="2" height="2" fill="#fff"/></svg>
<div class="t m" style="top:519px;font-size:11.650px">Gradle tasks [:app:generateDebugSources, :app:generateDebugAndroidTestSources]</div>
<div class="t m" style="top:537px">:app:preBuild UP-TO-DATE</div>
<div class="t m" style="top:555px">:app:preDebugBuild UP-TO-DATE</div>
<div class="t m" style="top:573px">:app:checkDebugManifest</div>
<div class="t m" style="top:591px">:app:preReleaseBuild UP-TO-DATE</div>
<div class="t m" style="top:609px">:app:prepareComAndroidSupportAppcompatV72311Library UP-TO-DATE</div>
<div class="t m" style="top:627px">:app:prepareComAndroidSupportSupportV42311Library UP-TO-DATE</div>
<div class="t m" style="top:645px">:app:prepareDebugDependencies</div>
<div class="t m" style="top:663px;height:8px;overflow:hidden">:app:compileDebugAidl UP-TO-DATE</div>

<!-- bottom tool bar -->
<div class="a" style="left:229px;top:685px;width:101px;height:23px;background:#c8c8c8"></div>
<svg class="s" style="left:29px;top:691px" width="14" height="14"><circle cx="7" cy="8" r="5" fill="#e8b98a"/><path fill="#4a94cc" d="M2 14c0-3 10-3 10 0z"/><circle cx="4" cy="3" r="2.500" fill="#fff" stroke="#777"/></svg>
<svg class="s" style="left:100px;top:691px;width:13px;height:15px"><use href="#and"/></svg>
<svg class="s" style="left:241px;top:691px" width="14" height="14"><rect x=".5" y=".5" width="11" height="12" fill="#f5d9a8" stroke="#d9a463"/><path stroke="#b98a45" d="M3 4h6M3 6.500h6M3 9h6"/></svg>
<svg class="s" style="left:342px;top:691px" width="14" height="14"><rect x=".5" y=".5" width="11" height="11" fill="#ddd" stroke="#777"/><path stroke="#777" fill="none" d="M3 3l2 2-2 2M6 8h3"/></svg>
<div class="t" style="left:46px;top:690px;font-size:11.200px">TODO</div>
<div class="t" style="left:117px;top:690px"><span class="u">6</span>: Android Monitor</div>
<div class="t" style="left:257px;top:690px;font-size:11.200px"><span class="u">0</span>: Messages</div>
<div class="t" style="left:358px;top:690px">Terminal</div>
<svg class="s" style="left:1139px;top:690px" width="13" height="13"><path fill="#eeb34f" d="M0 0h12v9H6l-3 3V9H0z"/><rect x="5.200" y="2" width="1.600" height="4" fill="#7a4a10"/><rect x="5.200" y="7" width="1.600" height="1.500" fill="#7a4a10"/></svg>
<div class="t" style="left:1151px;top:690px;font-size:11.500px">1 <span style="margin-left:2px">Event Log</span></div>
<svg class="s" style="left:1234px;top:691px" width="13" height="13"><rect x=".5" y=".5" width="11" height="11" fill="#e8eff4" stroke="#6c8ca5"/><path stroke="#6c8ca5" d="M2.500 3.500h7M2.500 6h7M2.500 8.500h5"/></svg>
<div class="t" style="left:1251px;top:690px;font-size:11.600px">Gradle Console</div>

<!-- status bar -->
<div class="a" style="left:0;top:708px;width:1366px;height:1px;background:#b4b4b4"></div>
<div class="a" style="left:0;top:709px;width:1366px;height:18px;background:#e8e8e8"></div>
<div class="a" style="left:5px;top:711px;width:13px;height:12px;background:#ccc;border:1px solid #999;border-bottom:2px solid #888"></div>
<div class="t" style="left:27px;top:710px;font-size:11.800px">Gradle build finished with 1 error(s) in 9s 600ms (a minute ago)</div>
<div class="a" style="left:1047px;top:709px;width:1px;height:18px;background:#ccc"></div>
<div class="a" style="left:1075px;top:709px;width:1px;height:18px;background:#ccc"></div>
<div class="a" style="left:1102px;top:709px;width:1px;height:18px;background:#ccc"></div>
<div class="a" style="left:1146px;top:709px;width:1px;height:18px;background:#ccc"></div>
<div class="a" style="left:1290px;top:709px;width:1px;height:18px;background:#ccc"></div>
<div class="t" style="left:1054px;top:710px">1:1</div>
<div class="t" style="left:1080px;top:710px">LF<span style="font-size:8px;margin-left:1px">⇕</span></div>
<div class="t" style="left:1106px;top:710px">UTF-8<span style="font-size:8px;margin-left:1px">⇕</span></div>
<div class="t" style="left:1151px;top:710px;color:#999">Context: &lt;no context&gt;</div>
<svg class="s" style="left:1296px;top:711px" width="66" height="14"><rect x="1" y="6" width="8" height="6" fill="#777"/><path stroke="#777" fill="none" d="M2.500 6V3a2.500 2.500 0 0 1 5 0"/><rect x="25" y="1" width="9" height="12" rx="3" fill="#bbb"/><path stroke="#bbb" d="M23 6h13"/><circle cx="52.500" cy="7" r="6" fill="#e0674f"/><rect x="51.500" y="3" width="2" height="5" fill="#fff"/><rect x="51.500" y="9" width="2" height="2" fill="#fff"/></svg>

<!-- taskbar -->
<div class="a" style="left:0;top:727px;width:1366px;height:41px;background:#0a0e17"></div>
<div class="a" style="left:48px;top:727px;width:344px;height:41px;background:#3a3a3a"></div>
<svg class="s" style="left:16px;top:740px" width="16" height="16"><path fill="#fff" d="M0 2.200l6.800-1v6.300H0zM7.600 1l8.400-1v7.500H7.600zM0 8.300h6.800v6.500L0 13.800zM7.600 8.300H16V16l-8.400-1.100z"/></svg>
<div class="t" style="left:60px;top:739px;font-size:14.500px;line-height:18px;height:18px;color:#a0a0a0">Procurar no Windows</div>
<svg class="s" style="left:406px;top:741px" width="20" height="15"><rect x="3.500" y=".5" width="12" height="14" fill="none" stroke="#fff"/><path stroke="#fff" fill="none" d="M2 2.500H.5v10H2M17 2.500h1.500v10H17"/></svg>
<svg class="s" style="left:455px;top:737px" width="22" height="21"><path fill="#f4d36a" d="M0 0h8l2 3h12v18H0z"/><path fill="#f9e08f" d="M0 5h22v5H0z"/><path fill="#2d9ad6" d="M6 14h10v7h-2v-4H8v4H6z"/></svg>
<svg class="s" style="left:503px;top:736px" width="23" height="23"><circle cx="11.500" cy="11.500" r="11" fill="#de4b3a"/><path fill="#4ca84f" d="M11.500 23A11.500 11.500 0 0 1 2 5l6 9z"/><path fill="#fbc433" d="M23 11.500A11.500 11.500 0 0 1 11.500 23L17 14z"/><circle cx="11.500" cy="11.500" r="5" fill="#4a8ee8" stroke="#fff" stroke-width="1.500"/></svg>
<div class="t b" style="left:553px;top:730px;font-size:32px;line-height:32px;height:32px;color:#1173c9">e</div>
<svg class="s" style="left:601px;top:736px" width="22" height="24"><circle cx="11" cy="11" r="10" fill="#8fb35a"/><circle cx="11" cy="9" r="3.500" fill="#5f7a38"/><path stroke="#eee" stroke-width="1.500" d="M11 8L5 23M11 8l6 15"/></svg>
<div class="a" style="left:651px;top:737px;width:18px;height:23px;background:#2a1638;border:1.500px solid #9a5dd8"></div>
<div class="t" style="left:654px;top:741px;font-size:13px;color:#c89bf2">Pr</div>
<svg class="s" style="left:699px;top:737px" width="24" height="24"><path fill="#fff" d="M17 0l7 3v18l-7 3-10-9-4 3-3-1V7l3-1 4 3z"/><path fill="#68217a" d="M18 3l4 2v14l-4 2-9-9zM2 8.500l4 3.500-4 3.500z"/><path fill="#fff" d="M17 7.500v9l-5-4.500z"/></svg>
<svg class="s" style="left:749px;top:737px" width="22" height="24"><path fill="#dbe8f5" d="M11 0l10 5v13l-10 6-10-6V5z"/><path fill="#8fb4d8" d="M11 9l10-4v13l-10 6z"/></svg>
<svg class="s" style="left:797px;top:736px" width="24" height="25"><path fill="#4f7796" d="M3 1c6-2 15-2 19 1 3 4 0 11-3 12l-2 2c0 4-1 8-4 8-2 0-3-4-3-8l-2-1c-3 1-6-2-6-6S1 2 3 1z"/><path stroke="#cfe0ec" fill="none" d="M7 3v9M12 2c-2 3-2 7 1 11M18 5c1 3 0 7-2 9"/></svg>
<svg class="s" style="left:846px;top:736px" width="24" height="24"><circle cx="11" cy="11" r="10" fill="#04a5e6"/><circle cx="18" cy="18" r="5.500" fill="#7cc243" stroke="#fff"/></svg>
<div class="t b" style="left:851px;top:737px;font-size:17px;line-height:20px;height:20px;color:#fff">S</div>
<svg class="s" style="left:895px;top:737px" width="22" height="24"><path fill="#183a61" stroke="#e4e4e4" stroke-width="1.500" d="M11 1l9 4.500v13L11 23l-9-4.500v-13z"/><path fill="none" stroke="#e4e4e4" stroke-width="1.500" d="M2 5.500L11 10l9-4.500M11 10v13"/></svg>
<div class="a" style="left:945px;top:737px;width:23px;height:23px;border-radius:12px;background:#e1245f"></div>
<div class="t" style="left:948px;top:741px;font-size:13px;color:#fff">oO</div>
<div class="a" style="left:994px;top:737px;width:23px;height:23px;border-radius:12px;background:#fff"></div>
<div class="t" style="left:997px;top:741px;font-size:13px;color:#e1245f">oO</div>
<div class="a" style="left:1030px;top:727px;width:50px;height:41px;background:#2d3136"></div>
<svg class="s" style="left:1043px;top:737px" width="22" height="24"><circle cx="11" cy="11" r="10" fill="#8fb35a"/><circle cx="11" cy="9" r="3.500" fill="#5f7a38"/><path stroke="#eee" stroke-width="1.500" d="M11 8L5 23M11 8l6 15"/></svg>
<div class="a" style="left:495px;top:766px;width:39px;height:2px;background:#9cc8ee"></div>
<div class="a" style="left:839px;top:766px;width:40px;height:2px;background:#9cc8ee"></div>
<div class="a" style="left:887px;top:766px;width:40px;height:2px;background:#9cc8ee"></div>
<div class="a" style="left:936px;top:766px;width:40px;height:2px;background:#9cc8ee"></div>
<div class="a" style="left:985px;top:766px;width:40px;height:2px;background:#9cc8ee"></div>
<div class="a" style="left:1030px;top:766px;width:50px;height:2px;background:#9cc8ee"></div>
<svg class="s" style="left:1131px;top:744px" width="13" height="8"><path fill="none" stroke="#eee" stroke-width="1.300" d="M.5 7l6-6 6 6"/></svg>
<svg class="s" style="left:1155px;top:744px" width="16" height="10"><rect x=".5" y=".5" width="13" height="8" fill="none" stroke="#eee"/><rect x="14" y="3" width="1.500" height="3" fill="#eee"/><rect x="2" y="2" width="2" height="5" fill="#eee"/></svg>
<svg class="s" style="left:1180px;top:741px" width="15" height="14"><path fill="none" stroke="#ccc" d="M1 13a12 12 0 0 1 12-12M4 13a9 9 0 0 1 9-9M7 13a6 6 0 0 1 6-6"/><circle cx="12" cy="12" r="1.500" fill="#eee"/></svg>
<svg class="s" style="left:1202px;top:741px" width="17" height="14"><path fill="none" stroke="#eee" d="M.5 5h3L7.500 1v12l-4-4h-3zM10 4.500a3 3 0 0 1 0 5M12 2.500a6 6 0 0 1 0 9M14 .5a9 9 0 0 1 0 13"/></svg>
<svg class="s" style="left:1226px;top:740px" width="18" height="17"><path fill="#eee" d="M0 0h16v12H6l-3 3v-3H0z"/><path stroke="#0a0e17" d="M3 3.500h10M3 6h10M3 8.500h6"/><circle cx="12" cy="12" r="4" fill="#0a0e17" stroke="#eee"/><path stroke="#eee" d="M10 12h4"/></svg>
<div class="t" style="left:1252px;top:731px;font-size:12px;color:#e6e6e6">POR</div>
<div class="t" style="left:1254px;top:749px;font-size:12px;color:#e6e6e6">PTB</div>
<div class="t" style="left:1308px;top:731px;font-size:12px;color:#e6e6e6">00:44</div>
<div class="t" style="left:1292px;top:749px;font-size:12px;color:#e6e6e6">27/02/2016</div>
</body></html>
